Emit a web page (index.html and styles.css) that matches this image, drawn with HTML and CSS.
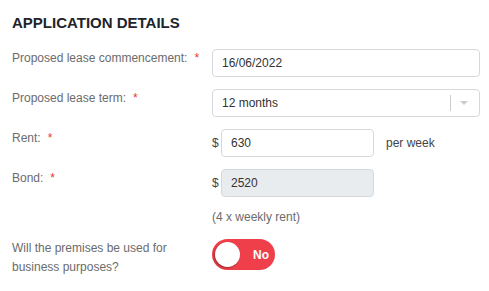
FILE: index.html
```html
<!DOCTYPE html>
<html lang="en">
<head>
    <meta charset="UTF-8">
    <title>Application Details</title>
    <link rel="stylesheet" href="styles.css">
</head>
<body>
    <div class="container">
        <h2 class="section-title">APPLICATION DETAILS</h2>

        <div class="form">
            <div class="form-row">
                <label class="form-label">Proposed lease commencement:<span class="req">*</span></label>
                <div class="form-field">
                    <input type="text" class="form-input" value="16/06/2022">
                </div>
            </div>

            <div class="form-row">
                <label class="form-label">Proposed lease term:<span class="req">*</span></label>
                <div class="form-field">
                    <div class="select">
                        <span class="select-value">12 months</span>
                        <span class="select-sep"></span>
                        <span class="select-arrow"></span>
                    </div>
                </div>
            </div>

            <div class="form-row">
                <label class="form-label">Rent:<span class="req">*</span></label>
                <div class="form-field money">
                    <span class="currency">$</span>
                    <input type="text" class="form-input short" value="630">
                    <span class="unit">per week</span>
                </div>
            </div>

            <div class="form-row">
                <label class="form-label">Bond:<span class="req">*</span></label>
                <div class="form-field stacked">
                    <div class="money">
                        <span class="currency">$</span>
                        <input type="text" class="form-input short" value="2520" disabled>
                    </div>
                    <div class="help-text">(4 x weekly rent)</div>
                </div>
            </div>

            <div class="form-row">
                <label class="form-label">Will the premises be used for business purposes?</label>
                <div class="form-field">
                    <div class="toggle">
                        <span class="toggle-knob"></span>
                        <span class="toggle-text">No</span>
                    </div>
                </div>
            </div>
        </div>
    </div>
</body>
</html>
```

FILE: styles.css
```css
* {
    margin: 0;
    padding: 0;
    box-sizing: border-box;
}

body {
    font-family: 'Liberation Sans', Arial, sans-serif;
    background-color: #ffffff;
    color: #333333;
    width: 489px;
    height: 291px;
    overflow: hidden;
}

.container {
    padding: 14px 0 0 12px;
}

.section-title {
    font-size: 15px;
    font-weight: bold;
    line-height: 17px;
    color: #212529;
}

.form {
    margin-top: 18px;
    display: flex;
    flex-direction: column;
    gap: 12px;
}

.form-row {
    display: grid;
    grid-template-columns: 200px 268px;
    align-items: start;
}

.form-label {
    font-size: 12px;
    line-height: 19px;
    color: #6b6b6b;
}

.req {
    color: #e53935;
    margin-left: 7px;
}

.form-field {
    display: flex;
    align-items: center;
}

.form-input {
    font-family: 'Liberation Sans', Arial, sans-serif;
    font-size: 12px;
    color: #333333;
    width: 268px;
    height: 28px;
    padding: 0 9px;
    border: 1px solid #d6d9dc;
    border-radius: 4px;
    background: #ffffff;
    outline: none;
}

.form-input.short {
    width: 153px;
}

.form-input:disabled {
    background: #e9ecef;
    color: #333333;
}

.money {
    display: flex;
    align-items: center;
}

.currency {
    font-size: 12px;
    color: #444444;
    width: 9px;
}

.unit {
    font-size: 12px;
    color: #444444;
    margin-left: 12px;
}

.stacked {
    flex-direction: column;
    align-items: flex-start;
}

.help-text {
    font-size: 12px;
    line-height: 19px;
    color: #6b6b6b;
    margin-top: 11px;
}

.select {
    width: 268px;
    height: 28px;
    border: 1px solid #d6d9dc;
    border-radius: 4px;
    display: flex;
    align-items: center;
    padding-left: 9px;
    font-size: 12px;
}

.select-value {
    flex: 1;
}

.select-sep {
    width: 1px;
    height: 16px;
    background: #cccccc;
}

.select-arrow {
    width: 0;
    height: 0;
    border-left: 4px solid transparent;
    border-right: 4px solid transparent;
    border-top: 4px solid #cccccc;
    margin: 0 11px 0 9px;
}

.toggle {
    width: 63px;
    height: 31px;
    border-radius: 16px;
    background: #ef3f4a;
    display: flex;
    align-items: center;
    padding-left: 3px;
}

.toggle-knob {
    width: 25px;
    height: 25px;
    border-radius: 50%;
    background: #ffffff;
    box-shadow: -1px 1px 2px rgba(0, 0, 0, 0.35);
}

.toggle-text {
    color: #ffffff;
    font-size: 12px;
    font-weight: bold;
    margin-left: 13px;
}
```
